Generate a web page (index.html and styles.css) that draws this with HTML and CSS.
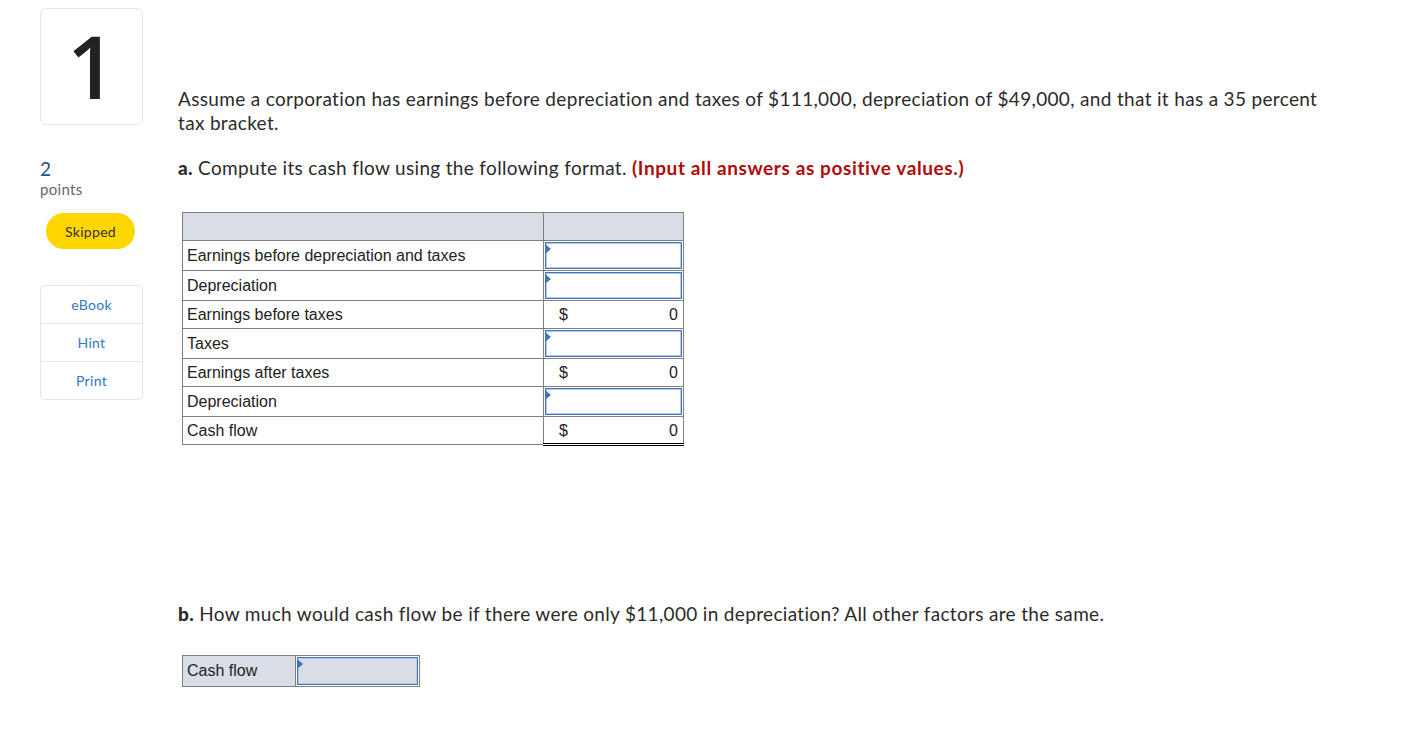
FILE: index.html
```html
<!DOCTYPE html>
<html>
<head>
<meta charset="utf-8">
<link rel="stylesheet" href="styles.css">
</head>
<body>
<div class="page">
  <aside class="side">
    <div class="qnum">1</div>
    <div class="pts"><span class="pts-n">2</span><span class="pts-l">points</span></div>
    <div class="status">Skipped</div>
    <ul class="tools">
      <li>eBook</li>
      <li>Hint</li>
      <li>Print</li>
    </ul>
  </aside>
  <main class="main">
    <p class="intro">Assume a corporation has earnings before depreciation and taxes of $111,000, depreciation of $49,000, and that it has a 35 percent tax bracket.</p>
    <p class="part"><b>a.</b> Compute its cash flow using the following format. <span class="warn">(Input all answers as positive values.)</span></p>
    <table class="grid">
      <tr class="head"><td class="lbl"></td><td class="val"></td></tr>
      <tr><td class="lbl">Earnings before depreciation and taxes</td><td class="val inp"><div class="box"></div></td></tr>
      <tr><td class="lbl">Depreciation</td><td class="val inp"><div class="box"></div></td></tr>
      <tr><td class="lbl">Earnings before taxes</td><td class="val calc top"><span>$</span><span>0</span></td></tr>
      <tr><td class="lbl">Taxes</td><td class="val inp"><div class="box"></div></td></tr>
      <tr><td class="lbl">Earnings after taxes</td><td class="val calc top"><span>$</span><span>0</span></td></tr>
      <tr><td class="lbl">Depreciation</td><td class="val inp"><div class="box"></div></td></tr>
      <tr><td class="lbl">Cash flow</td><td class="val calc top dbl"><span>$</span><span>0</span></td></tr>
    </table>
    <p class="part partb"><b>b.</b> How much would cash flow be if there were only $11,000 in depreciation? All other factors are the same.</p>
    <table class="grid gridb">
      <tr><td class="lbl">Cash flow</td><td class="val inp"><div class="box"></div></td></tr>
    </table>
  </main>
</div>
</body>
</html>
```
FILE: styles.css
```css
html, body { margin: 0; padding: 0; background: #fff; }
body { font-family: Lato, "Open Sans", sans-serif; color: #2b2b2b; }
.page { display: flex; align-items: flex-start; }
.side { width: 103px; margin-left: 40px; padding-top: 8px; display: flex; flex-direction: column; }
.qnum { height: 117px; border: 1px solid #e6e6e6; border-radius: 6px; display: flex; align-items: center; justify-content: center; font-size: 86px; line-height: 1; color: #222; font-family: "Open Sans", sans-serif; font-weight: 600; padding-bottom: 2px; box-sizing: border-box; }
.pts { margin-top: 34px; display: flex; flex-direction: column; }
.pts-n { font-size: 19px; color: #1d4f91; line-height: 20px; letter-spacing: 0.3px; }
.pts-l { font-size: 15px; color: #666; line-height: 20px; letter-spacing: 0.3px; }
.status { margin: 14px 0 0 6px; width: 89px; height: 36px; border-radius: 18px; background: #ffd600; font-size: 14px; color: #333; display: flex; align-items: center; justify-content: center; letter-spacing: 0.3px; }
.tools { list-style: none; margin: 36px 0 0; padding: 0; border: 1px solid #e6e6e6; border-radius: 5px; }
.tools li { height: 37px; display: flex; align-items: center; justify-content: center; font-size: 14px; color: #2f78c4; border-top: 1px solid #e6e6e6; letter-spacing: 0.3px; }
.tools li:first-child { border-top: 0; }
.main { margin-left: 35px; padding-top: 87px; width: 1155px; }
.intro { margin: 0; font-size: 19px; line-height: 24px; letter-spacing: 0.33px; }
.part { margin: 21px 0 0; font-size: 19px; line-height: 24px; letter-spacing: 0.33px; }
.part b { font-weight: 900; }
.warn { color: #b00a0a; font-weight: 700; letter-spacing: 0.6px; }
.grid { border-collapse: collapse; margin: 32px 0 0 4px; font-family: Arial, "Liberation Sans", sans-serif; font-size: 16px; color: #222; letter-spacing: 0; }
.grid td { border: 1px solid #808080; height: 28px; padding: 0; box-sizing: border-box; }
.grid .lbl { width: 361px; padding-left: 4px; }
.grid .val { width: 140px; position: relative; }
.grid .head td { background: #d9dde6; }
.grid .inp { padding: 1px 1px 1px 1px; }
.box { height: 25px; border: 1px solid #3f73bd; box-shadow: inset 0 0 0 1px #b3cbea; background: #fff; position: relative; }
.box::before { content: ""; position: absolute; left: -1px; top: -1px; border-top: 5px solid transparent; border-bottom: 5px solid transparent; border-left: 6px solid #3f73bd; transform: translateY(2px); }
.calc span:first-child { position: absolute; left: 15px; top: 5px; }
.calc span:last-child { position: absolute; right: 5px; top: 5px; }
.grid .top { border-top: 1px solid #000; }
.grid .dbl { border-bottom: 3px double #000; }
.partb { margin-top: 156px; }
.gridb { margin-top: 29px; }
.gridb .lbl { width: 113px; background: #d9dde6; height: 30px; }
.gridb .val { width: 124px; }
.gridb .box { background: #d9dde6; height: 26px; }
```
